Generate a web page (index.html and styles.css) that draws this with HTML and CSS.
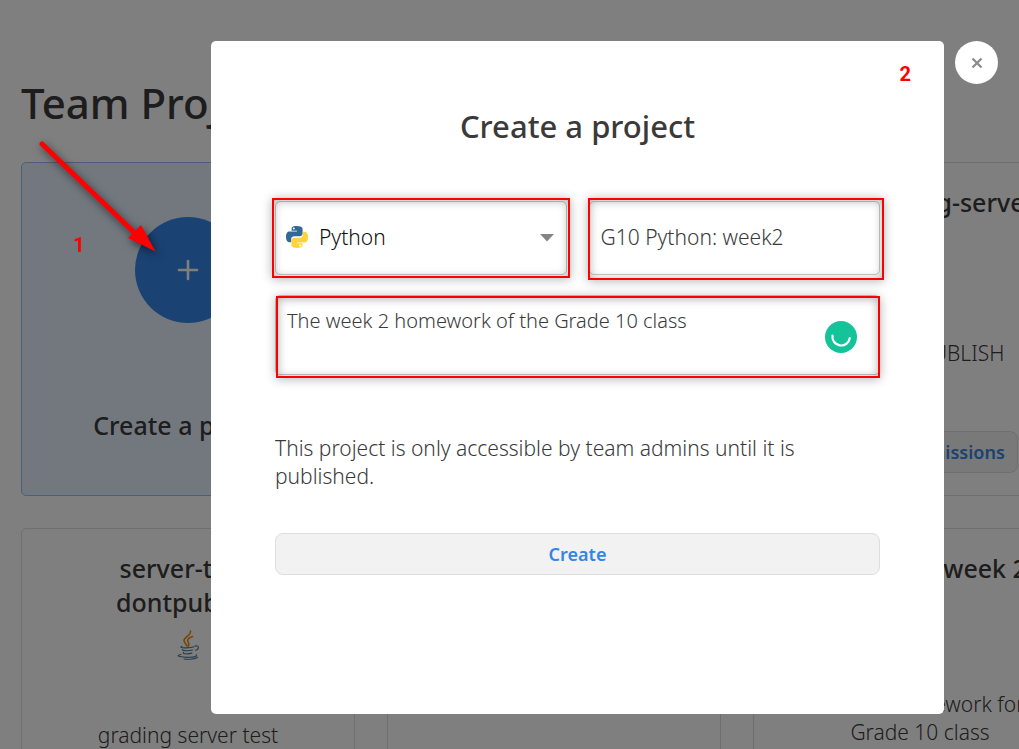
FILE: index.html
```html
<!DOCTYPE html>
<html lang="en">
<head>
<meta charset="utf-8">
<title>Team Projects</title>
<link rel="stylesheet" href="styles.css">
</head>
<body>
<main class="page">
  <h1 class="page-title">Team Projects</h1>
  <div class="card-grid">
    <a class="card card-new" href="#create">
      <span class="plus">
        <svg width="22" height="22" viewBox="0 0 22 22" aria-hidden="true"><path d="M11 2v18M2 11h18" stroke="#fff" stroke-width="2.6" stroke-linecap="round"/></svg>
      </span>
      <span class="card-title">Create a project</span>
    </a>
    <article class="card"></article>
    <article class="card">
      <h2 class="card-title">test-grading-server</h2>
      <span class="lang"></span>
      <p class="card-text">DO NOT PUBLISH</p>
      <button class="button" type="button">View 2 submissions</button>
    </article>
    <article class="card card-tall">
      <h2 class="card-title">server-test-<br>dontpublish</h2>
      <span class="lang">
        <svg width="24" height="30" viewBox="0 0 24 30" fill="none" stroke-linecap="round" aria-hidden="true">
          <path d="M14.500 1c1 4-6.500 6-6.500 9.500 0 2 2 3.500 3.200 5.500M16.500 6.500c-3 1-5 2.500-4.800 4.500.2 1.500 2.300 2.500.8 5" stroke="#ea8b10" stroke-width="1.600"/>
          <path d="M6 16.500c-5 1.500 8 2 12 .3M19 16c5-1 4 3.500.5 4.300M6.500 19.500c-1 1.500 7 1.500 10 .5M7.500 22.500c-1.500 1.500 6 1.800 8.500.5M5 24.500c-8 1.500 2 3 8 2.800 6-.1 9-1.500 7-2.500M8 29c5 .6 12 0 13.500-1.800" stroke="#4e7896" stroke-width="1.100"/>
        </svg>
      </span>
      <p class="card-text">grading server test</p>
    </article>
    <article class="card card-tall"></article>
    <article class="card card-tall">
      <h2 class="card-title">G9 Python week 2</h2>
      <span class="lang"></span>
      <p class="card-text">Week 2 homework for Grade 10 class</p>
    </article>
  </div>
</main>

<div class="overlay">
  <section class="dialog" role="dialog" aria-modal="true" aria-labelledby="dialog-title">
    <span class="step step-two">2</span>
    <h2 class="dialog-title" id="dialog-title">Create a project</h2>
    <form class="form">
      <div class="field-row">
        <div class="field mark mark-language">
          <svg class="python" width="22" height="22" viewBox="0 0 110 110" aria-hidden="true">
            <path fill="#306998" d="M54 0C27 0 28 12 28 12v12h27v4H18S0 26 0 54s16 27 16 27h10V67s-1-16 15-16h27s15 0 15-15V15S85 0 54 0zM39 8a5 5 0 1 1 0 10 5 5 0 0 1 0-10z"/>
            <path fill="#ffd43b" d="M56 110c27 0 26-12 26-12V86H55v-4h37s18 2 18-26-16-27-16-27H84v14s1 16-15 16H42s-15 0-15 15v21s-2 15 29 15zm15-8a5 5 0 1 1 0-10 5 5 0 0 1 0 10z"/>
          </svg>
          <select class="control language" aria-label="Language"><option>Python</option></select>
          <svg class="caret" width="14" height="8" viewBox="0 0 14 8" aria-hidden="true"><path d="M0 0h14L7 7.500z" fill="#858585"/></svg>
        </div>
        <div class="field mark mark-name">
          <input class="control" type="text" aria-label="Project name" value="G10 Python: week2">
        </div>
      </div>
      <div class="field mark mark-description">
        <textarea class="control description" aria-label="Description" spellcheck="false">The week 2 homework of the Grade 10 class</textarea>
        <svg class="checker" width="32" height="32" viewBox="0 0 32 32" aria-hidden="true"><circle cx="16" cy="16" r="16" fill="#15c39a"/><path d="M7.500 14.500a8.700 8.700 0 0 0 17.300 2.500" fill="none" stroke="#fff" stroke-width="2.200" stroke-linecap="round"/></svg>
      </div>
      <p class="note">This project is only accessible by team admins until it is published.</p>
      <button class="button" type="submit">Create</button>
    </form>
  </section>
  <button class="close" type="button" aria-label="Close">
    <svg width="12" height="12" viewBox="0 0 12 12" aria-hidden="true"><path d="M1.500 1.500l9 9m0-9l-9 9" stroke="#8c8c8c" stroke-width="2.300"/></svg>
  </button>
</div>

<span class="step step-one">1</span>
<svg class="arrow" width="150" height="140" viewBox="0 0 150 140" aria-hidden="true">
  <path d="M22 24L118 116" stroke="#f00" stroke-width="5" stroke-linecap="round"/>
  <path d="M121 105l14.500 26.500L108 118z" fill="#f00"/>
</svg>
</body>
</html>
```

FILE: styles.css
```css
* { box-sizing: border-box; }

body {
  margin: 0;
  min-height: 100vh;
  position: relative;
  overflow: hidden;
  background: #fff;
  color: #3a3a3a;
  font-family: "Noto Sans", "Open Sans", sans-serif;
  font-size: 21px;
  font-weight: 300;
  line-height: 28px;
}

h1, h2, p { margin: 0; }

.page {
  height: 100vh;
  overflow: hidden;
  padding: 72px 21px 0;
}

.page-title {
  font-size: 42px;
  font-weight: 500;
  line-height: 62px;
  margin-bottom: 28px;
}

.card-grid {
  display: grid;
  grid-template-columns: repeat(3, minmax(334px, 1fr));
  gap: 32px;
}

.card {
  display: flex;
  flex-direction: column;
  align-items: center;
  min-height: 334px;
  padding: 22px 58px;
  border: 1px solid #dedede;
  border-radius: 5px;
  color: inherit;
  text-align: center;
  text-decoration: none;
}

.card-new {
  justify-content: space-between;
  padding: 54px 32px 53px;
  background: #e6f1ff;
  border-color: #94c0f4;
}

.card-tall { padding-bottom: 66px; }

.plus {
  display: grid;
  place-items: center;
  width: 106px;
  height: 106px;
  border-radius: 50%;
  background: #3485e4;
}

.card-title {
  font-size: 25px;
  font-weight: 500;
  line-height: 34px;
  white-space: nowrap;
}

.lang {
  height: 30px;
  margin: 11px 0 14px;
}

.card-text {
  flex: 1;
  display: flex;
  align-items: center;
}

.button {
  height: 42px;
  padding: 0 12px;
  border: 1px solid #dedede;
  border-radius: 8px;
  background: #f2f2f2;
  color: #3485e4;
  font: 600 18px/28px "Noto Sans", sans-serif;
  white-space: nowrap;
}

.overlay {
  position: fixed;
  inset: 0;
  display: flex;
  justify-content: flex-end;
  align-items: flex-start;
  gap: 11px;
  padding: 41px 21px 35px;
  background: rgba(0, 0, 0, 0.5);
}

.dialog {
  position: relative;
  width: 733px;
  max-width: 72vw;
  height: 100%;
  padding: 63px 64px;
  border-radius: 5px;
  background: #fff;
}

.dialog-title {
  font-size: 31px;
  font-weight: 500;
  line-height: 44px;
  text-align: center;
}

.form {
  display: flex;
  flex-direction: column;
  margin-top: 53px;
}

.field-row {
  display: grid;
  grid-template-columns: 1fr 1fr;
  gap: 22px;
  margin-bottom: 20px;
}

.field { position: relative; display: flex; }

.control {
  appearance: none;
  width: 100%;
  height: 74px;
  padding: 0 11px 2px;
  border: 1px solid #c8c8c8;
  border-radius: 5px;
  background: #fff;
  color: #3a3a3a;
  font: inherit;
  outline: 0;
}

.language { padding-left: 43px; color: #111; }

.description {
  height: 80px;
  padding-top: 11px;
  font-size: 20px;
  resize: none;
}

.python, .caret, .checker { position: absolute; }
.python { left: 11px; top: 25px; }
.caret { right: 13px; top: 33px; }
.checker { right: 23px; top: 26px; }

.mark::after {
  content: "";
  position: absolute;
  border: 2px solid #f00;
  box-shadow: 0 1px 10px rgba(0, 0, 0, 0.3), inset 0 1px 10px rgba(0, 0, 0, 0.3);
  pointer-events: none;
}
.mark-language::after { inset: -3px -3px -3px -3px; }
.mark-name::after { inset: -3px -4px -5px -1px; }
.mark-description::after { inset: 1px 0 -3px 1px; }

.note { margin: 59px 0 43px; }

.close {
  display: grid;
  place-items: center;
  width: 43px;
  height: 43px;
  padding: 0;
  border: 0;
  border-radius: 50%;
  background: #fff;
}

.step {
  position: absolute;
  color: #f00;
  font: 700 20px/24px Roboto, sans-serif;
}
.step-one { left: 73px; top: 233px; }
.step-two { right: 33px; top: 21px; }

.arrow {
  position: absolute;
  left: 20px;
  top: 120px;
  filter: drop-shadow(2px 3px 4px rgba(0, 0, 0, 0.6));
}
```
